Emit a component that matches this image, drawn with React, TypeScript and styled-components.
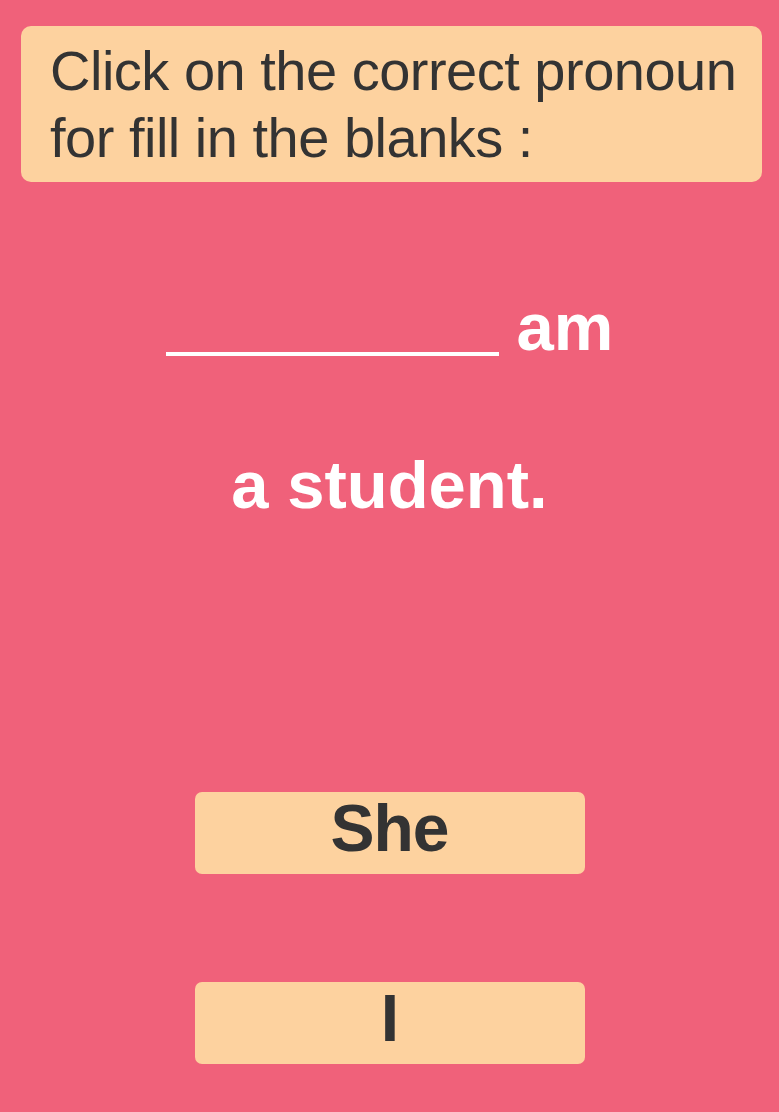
import React from "react";
import styled, { createGlobalStyle } from "styled-components";

const Global = createGlobalStyle`
  html, body {
    margin: 0;
    padding: 0;
    background: #f0617a;
  }
  body {
    font-family: "Liberation Sans", Arial, sans-serif;
  }
`;

const Page = styled.div`
  min-height: 1112px;
  background: #f0617a;
  display: flex;
  flex-direction: column;
  align-items: center;
  padding-top: 26px;
  box-sizing: border-box;
`;

const Prompt = styled.div`
  align-self: stretch;
  margin: 0 17px 0 21px;
  background: #fdd29f;
  border-radius: 10px;
  padding: 11px 18px 11px 29px;
  color: #333333;
  font-size: 56px;
  letter-spacing: -0.5px;
  line-height: 67px;
`;

const Sentence = styled.div`
  display: flex;
  flex-direction: column;
  align-items: center;
  margin-top: 107px;
  color: #ffffff;
  font-weight: 700;
  font-size: 67px;
  line-height: 76px;
  gap: 82px;
`;

const Line = styled.div`
  display: flex;
  align-items: baseline;
  gap: 18px;
`;

const Blank = styled.span`
  display: inline-block;
  width: 333px;
  border-bottom: 4px solid #ffffff;
  transform: translateY(6px);
`;

const Options = styled.div`
  display: flex;
  flex-direction: column;
  gap: 108px;
  margin-top: 269px;
`;

const Option = styled.button`
  width: 390px;
  height: 82px;
  box-sizing: border-box;
  border: none;
  border-radius: 7px;
  background: #fdd29f;
  color: #333333;
  font-family: "Liberation Sans", Arial, sans-serif;
  font-weight: 700;
  font-size: 66px;
  letter-spacing: -1px;
  line-height: 72px;
  padding: 0 0 10px;
  cursor: pointer;
`;

export default function App() {
  return (
    <>
      <Global />
      <Page>
        <Prompt>
          Click on the correct pronoun
          <br />
          for fill in the blanks :
        </Prompt>
        <Sentence>
          <Line>
            <Blank />
            <span>am</span>
          </Line>
          <Line>a student.</Line>
        </Sentence>
        <Options>
          <Option>She</Option>
          <Option>I</Option>
        </Options>
      </Page>
    </>
  );
}
